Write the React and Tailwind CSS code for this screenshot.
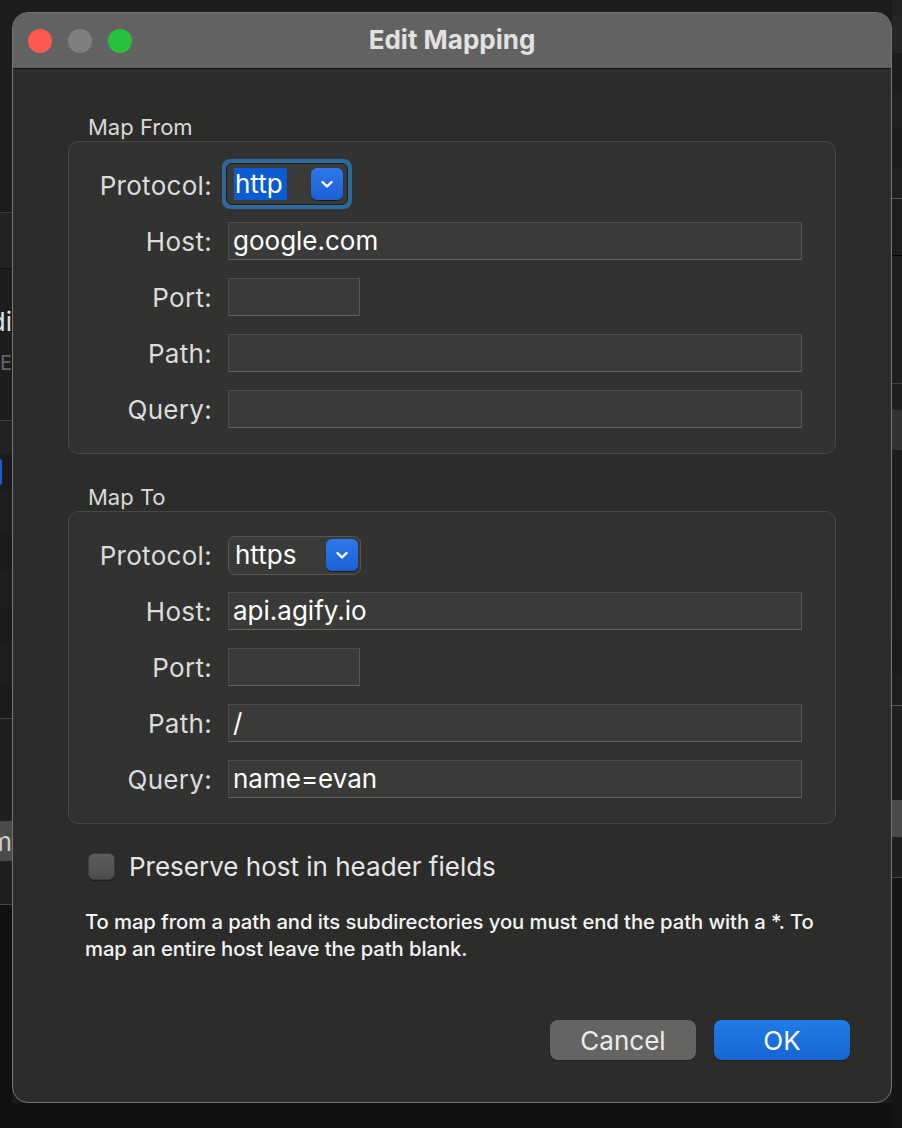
import React from "react";

const font = "font-['Inter','Liberation_Sans',sans-serif]";

const Chevron = () => (
  <div className="w-[32px] h-[32px] rounded-[6px] bg-gradient-to-b from-[#2f78ec] to-[#1b5fd6] flex items-center justify-center shadow-[0_1px_1px_rgba(0,0,0,0.5)]">
    <svg width="14" height="10" viewBox="0 0 14 10" fill="none">
      <path d="M2.5 3 L7 7.5 L11.5 3" stroke="white" strokeWidth="2.4" strokeLinecap="round" strokeLinejoin="round" />
    </svg>
  </div>
);

const Field = ({ value, width }) => (
  <div
    className={`h-[38px] ${width} bg-[#3a3b39] border border-[#4b4c4a] border-b-[#62635f] border-r-[#575856] px-[4px] text-[26px] leading-[36px] text-white`}
  >
    {value}
  </div>
);

const Row = ({ label, children }) => (
  <div className="flex items-center h-[38px]">
    <div className="w-[143px] text-right text-[26px] text-[#dcdcdc] tracking-[0.3px]">{label}</div>
    <div className="ml-[16px] flex items-center">{children}</div>
  </div>
);

const Group = ({ title, protocol }) => (
  <div>
    <div className="pl-[20px] h-[26px] leading-[26px] text-[22px] text-[#d9d9d9]">{title}</div>
    <div className="mt-[1px] h-[313px] rounded-[10px] border border-[#474846] bg-[#323331] pt-[24px] pb-[25px] flex flex-col gap-[18px]">
      <Row label="Protocol:">{protocol}</Row>
      <Row label="Host:">
        <Field value={title === "Map From" ? "google.com" : "api.agify.io"} width="w-[574px]" />
      </Row>
      <Row label="Port:">
        <Field value="" width="w-[132px]" />
      </Row>
      <Row label="Path:">
        <Field value={title === "Map From" ? "" : "/"} width="w-[574px]" />
      </Row>
      <Row label="Query:">
        <Field value={title === "Map From" ? "" : "name=evan"} width="w-[574px]" />
      </Row>
    </div>
  </div>
);

const LeftStrip = () => (
  <div className="w-[12px] flex flex-col shrink-0 overflow-hidden text-[26px]">
    <div className="h-[212px] bg-[#1c1c1c]" />
    <div className="h-[1px] bg-[#3a3a3a]" />
    <div className="h-[55px] bg-[#232323]" />
    <div className="h-[1px] bg-[#111111]" />
    <div className="h-[151px] bg-[#1d1d1d] flex flex-col items-end">
      <div className="mt-[38px] h-[30px] leading-[30px] text-[#e0e0e0] whitespace-nowrap flex justify-end w-[12px]">
        <span className="shrink-0">Edi</span>
      </div>
      <div className="mt-[14px] h-[24px] leading-[24px] text-[20px] text-[#666] whitespace-nowrap flex justify-end w-[12px]">
        <span className="shrink-0">E</span>
      </div>
    </div>
    <div className="h-[1px] bg-[#444]" />
    <div className="h-[33px] bg-[#222]" />
    <div className="h-[36px] bg-[#1b1b1b] flex items-center">
      <div className="w-[2px] h-[26px] bg-[#1a5dc8] rounded-r-[2px]" />
    </div>
    <div className="h-[42px] bg-[#1e1e1e]" />
    <div className="h-[38px] bg-[#1b1b1b]" />
    <div className="h-[38px] bg-[#1e1e1e]" />
    <div className="h-[38px] bg-[#1b1b1b]" />
    <div className="h-[38px] bg-[#1e1e1e]" />
    <div className="h-[34px] bg-[#1b1b1b]" />
    <div className="h-[1px] bg-[#444]" />
    <div className="h-[102px] bg-[#1f1f1f]" />
    <div className="h-[40px] bg-[#4a4a4a] flex justify-end items-center text-[#ccc] whitespace-nowrap">
      <span className="shrink-0">m</span>
    </div>
    <div className="h-[43px] bg-[#1f1f1f]" />
    <div className="h-[1px] bg-[#444]" />
    <div className="flex-1 bg-[#111111]" />
  </div>
);

const RightStrip = () => (
  <div className="w-[10px] flex flex-col shrink-0">
    <div className="h-[15px] bg-[#222]" />
    <div className="h-[38px] bg-[#262626]" />
    <div className="h-[38px] bg-[#1c1c1c]" />
    <div className="h-[38px] bg-[#202020]" />
    <div className="h-[38px] bg-[#1c1c1c]" />
    <div className="h-[31px] bg-[#202020]" />
    <div className="h-[1px] bg-[#555]" />
    <div className="h-[56px] bg-[#1e1e1e]" />
    <div className="h-[1px] bg-[#000]" />
    <div className="h-[127px] bg-[#1f1f1f]" />
    <div className="h-[1px] bg-[#444]" />
    <div className="h-[26px] bg-[#1f1f1f]" />
    <div className="h-[40px] bg-[#333]" />
    <div className="h-[154px] bg-[#1d1d1d]" />
    <div className="h-[36px] bg-[#1e1e1e]" />
    <div className="h-[34px] bg-[#1b1b1b]" />
    <div className="h-[31px] bg-[#1e1e1e]" />
    <div className="h-[1px] bg-[#555]" />
    <div className="h-[94px] bg-[#1f1f1f]" />
    <div className="h-[37px] bg-[#4a4a4a]" />
    <div className="h-[40px] bg-[#1f1f1f]" />
    <div className="h-[1px] bg-[#444]" />
    <div className="flex-1 bg-[#151515]" />
  </div>
);

export default function App() {
  return (
    <div className={`w-[902px] h-[1128px] flex bg-[#1b1b1b] overflow-hidden ${font}`}>
      <LeftStrip />
      <div className="w-[880px] shrink-0 flex flex-col">
        <div className="h-[12px] bg-[#1c1c1c]" />
        <div className="h-[1091px] rounded-[16px] border border-[#757575] bg-[#2c2d2b] overflow-hidden flex flex-col">
          <div className="h-[56px] shrink-0 bg-[#626262] border-b border-b-[#0d0d0d] grid grid-cols-[1fr_auto_1fr] items-center">
            <div className="flex items-center gap-[16px] pl-[15px]">
              <div className="w-[24px] h-[24px] rounded-full bg-[#fe5850]" />
              <div className="w-[24px] h-[24px] rounded-full bg-[#7f7f7f]" />
              <div className="w-[24px] h-[24px] rounded-full bg-[#28c13c]" />
            </div>
            <div className="text-[26px] font-bold text-[#e2e2e2] leading-none -mt-[2px]">Edit Mapping</div>
            <div />
          </div>

          <div className="px-[55px] pt-[45px] flex flex-col">
            <Group
              title="Map From"
              protocol={
                <div className="-ml-[6px] -mt-[2px] w-[130px] h-[50px] rounded-[8px] bg-[#2b6a9b] p-[4px]">
                  <div className="w-full h-full rounded-[6px] bg-[#3a3b39] border border-[#1e1e1e] flex items-center justify-between pl-[7px] pr-[4px]">
                    <span className="bg-[#0b5cd0] text-white text-[26px] leading-[32px] h-[32px] pl-[1px] pr-[4px]">http</span>
                    <Chevron />
                  </div>
                </div>
              }
            />
            <div className="mt-[30px]">
              <Group
                title="Map To"
                protocol={
                  <div className="w-[133px] h-[39px] rounded-[7px] bg-[#3a3b39] border border-[#555654] flex items-center justify-between pl-[6px] pr-[2px]">
                    <span className="text-white text-[26px] leading-[32px]">https</span>
                    <Chevron />
                  </div>
                }
              />
            </div>

            <div className="mt-[29px] pl-[20px] flex items-center h-[27px]">
              <div className="w-[27px] h-[27px] rounded-[6px] bg-gradient-to-b from-[#5d5e5c] to-[#4d4e4c] border border-[#3c3d3b] shadow-[0_1px_1px_rgba(0,0,0,0.4)]" />
              <span className="ml-[14px] text-[26px] text-[#e6e6e6]">Preserve host in header fields</span>
            </div>

            <p className="mt-[28px] pl-[17px] text-[20.3px] leading-[27px] text-[#f4f4f4] font-medium whitespace-nowrap tracking-[-0.1px]">
              To map from a path and its subdirectories you must end the path with a *. To
              <br />
              map an entire host leave the path blank.
            </p>

            <div className="mt-[58px] flex justify-end gap-[18px]">
              <button className="w-[146px] h-[40px] rounded-[8px] bg-[#646563] text-[26px] text-[#ececec] shadow-[0_1px_1px_rgba(0,0,0,0.3)]">
                Cancel
              </button>
              <button className="w-[136px] h-[40px] rounded-[8px] bg-gradient-to-b from-[#1f7ce8] to-[#1766d2] text-[26px] text-white shadow-[0_1px_1px_rgba(0,0,0,0.3)] mr-[-14px]">
                OK
              </button>
            </div>
          </div>
        </div>
        <div className="flex-1 bg-[#111111]" />
      </div>
      <RightStrip />
    </div>
  );
}
